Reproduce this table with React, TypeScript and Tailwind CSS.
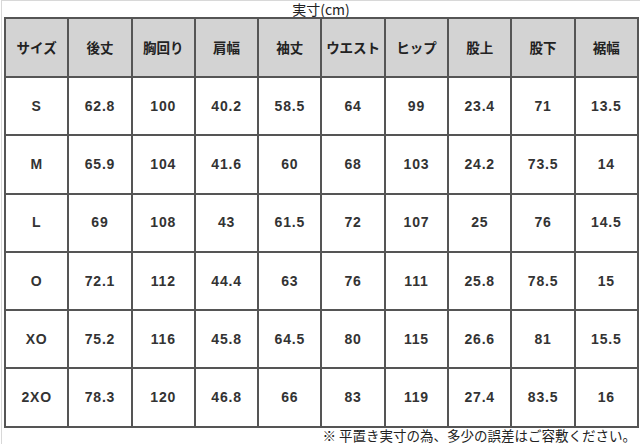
const HEADERS = ['サイズ', '後丈', '胸回り', '肩幅', '袖丈', 'ウエスト', 'ヒップ', '股上', '股下', '裾幅'];

const ROWS: string[][] = [
  ['S', '62.8', '100', '40.2', '58.5', '64', '99', '23.4', '71', '13.5'],
  ['M', '65.9', '104', '41.6', '60', '68', '103', '24.2', '73.5', '14'],
  ['L', '69', '108', '43', '61.5', '72', '107', '25', '76', '14.5'],
  ['O', '72.1', '112', '44.4', '63', '76', '111', '25.8', '78.5', '15'],
  ['XO', '75.2', '116', '45.8', '64.5', '80', '115', '26.6', '81', '15.5'],
  ['2XO', '78.3', '120', '46.8', '66', '83', '119', '27.4', '83.5', '16'],
];

const jp = { fontFamily: '"Noto Sans CJK JP", "Liberation Sans", sans-serif' };
const num = { fontFamily: '"Liberation Sans", "Noto Sans CJK JP", sans-serif' };

export default function App() {
  return (
    <div className="h-[444px] w-[640px] overflow-hidden bg-white">
      <div className="ml-[1px] flex h-full flex-col border-l border-t border-[#d8d8d8] pl-[2px] pr-[2px]">
        <div
          className="h-[16px] text-center text-[14px] leading-[16px] text-[#222]"
          style={jp}
        >
          実寸(cm)
        </div>
        <table className="w-[635px] table-fixed border-collapse">
          <thead>
            <tr className="h-[59px] bg-[#d3d3d3]">
              {HEADERS.map((h) => (
                <th
                  key={h}
                  className="border-2 border-[#555] p-0 text-center text-[13.5px] font-bold text-[#222]"
                  style={jp}
                >
                  {h}
                </th>
              ))}
            </tr>
          </thead>
          <tbody>
            {ROWS.map((row) => (
              <tr key={row[0]} className="h-[58.3px]">
                {row.map((v, i) => (
                  <td
                    key={i}
                    className="border-2 border-[#555] p-0 text-center text-[14px] font-bold tracking-[0.8px] text-[#333]"
                    style={num}
                  >
                    {v}
                  </td>
                ))}
              </tr>
            ))}
          </tbody>
        </table>
        <div
          className="pr-[2px] text-right text-[13.5px] leading-[15px] text-[#222]"
          style={jp}
        >
          ※ 平置き実寸の為、多少の誤差はご容敷ください。
        </div>
      </div>
    </div>
  );
}
